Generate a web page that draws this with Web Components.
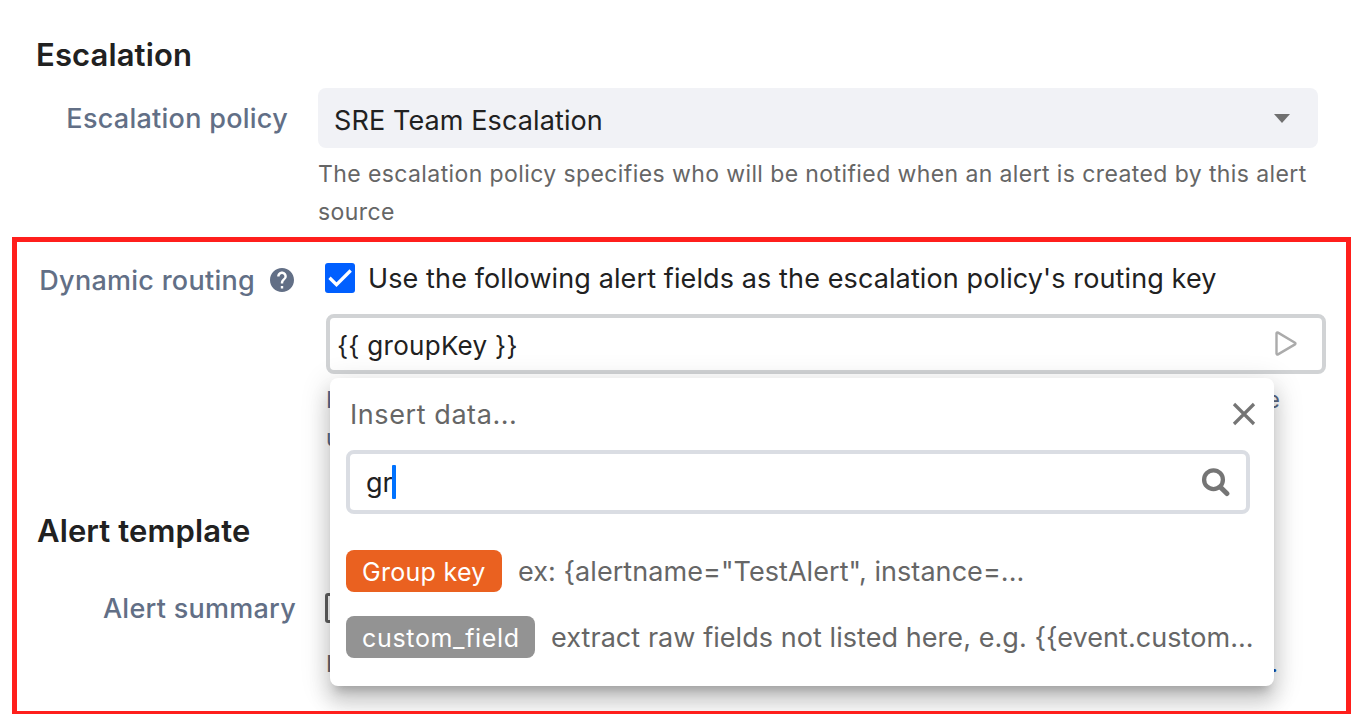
<!DOCTYPE html>
<html lang="en">
<head>
<meta charset="utf-8">
<title>Alert source</title>
<style>
html,body{margin:0;height:714px;overflow:hidden;background:#fff}
body{font-family:Inter,"Liberation Sans",sans-serif;color:#212121}
</style>
</head>
<body>
<alert-source-page></alert-source-page>
<script>
const define = (name, html) => customElements.define(name, class extends HTMLElement {
  connectedCallback() {
    if (this.shadowRoot) return;
    const t = document.createElement('template');
    t.innerHTML = html;
    this.attachShadow({ mode: 'open' }).append(t.content.cloneNode(true));
  }
});

define('section-title', `<style>
:host{display:block;font-size:31px;font-weight:600;line-height:40px;height:40px;letter-spacing:.12px;color:#212121;white-space:nowrap}
</style><slot></slot>`);

define('field-label', `<style>
:host{display:flex;justify-content:flex-end;align-items:center;gap:15px;height:40px;line-height:40px;font-size:27px;font-weight:450;letter-spacing:.27px;color:#626f86;white-space:nowrap}
</style><slot></slot>`);

define('help-icon', `<style>:host{display:block;width:24px;height:24px}svg{display:block}</style>
<svg width="24" height="24" viewBox="2 2 20 20"><path fill="#626f86" d="M12 2C6.48 2 2 6.48 2 12s4.480 10 10 10 10-4.480 10-10S17.520 2 12 2zm1 17h-2v-2h2v2zm2.070-7.750l-.9.920C13.450 12.900 13 13.500 13 15h-2v-.5c0-1.100.450-2.100 1.170-2.830l1.240-1.260c.370-.360.590-.860.590-1.410 0-1.100-.9-2-2-2s-2 .9-2 2H8c0-2.210 1.790-4 4-4s4 1.790 4 4c0 .880-.360 1.680-.930 2.250z"/></svg>`);

define('select-field', `<style>
:host{display:flex;align-items:center;justify-content:space-between;box-sizing:border-box;width:1000px;height:60px;border-radius:8px;background:#f1f2f6;padding:6px 28px 0 16px;font-size:27px;letter-spacing:.11px;line-height:40px}
svg{display:block;margin-top:-5px}
</style><slot></slot><svg width="16" height="9" viewBox="0 0 16 9"><path d="M0 0h16l-8 9z" fill="#707070"/></svg>`);

define('helper-text', `<style>
:host{display:block;font-size:23px;line-height:38px;letter-spacing:.4px;color:#666}
</style><slot></slot>`);

define('check-box', `<style>
:host{display:block;box-sizing:border-box;flex:none;width:30px;height:30px;border-radius:3px;border:3px solid #5f5f5f}
:host([checked]){border:0;background:#005fff}
svg{display:none}:host([checked]) svg{display:block}
</style><svg width="30" height="30"><path d="M4.500 14.800l7 6.800L25.700 7.500" fill="none" stroke="#fff" stroke-width="3.300"/></svg>`);

define('template-input', `<style>
:host{display:flex;align-items:center;justify-content:space-between;box-sizing:border-box;width:1000px;height:60px;border:4px solid #d1d3d5;border-radius:8px;padding:3px 25px 0 7px;font-size:26px;letter-spacing:.28px;line-height:40px}
svg{display:block;margin-top:-4px}
</style><slot></slot><svg width="22" height="25" viewBox="0 0 22 25"><path d="M1.500 2.500v20a1 1 0 0 0 1.500.9l17-10a1 1 0 0 0 0-1.700L3 1.600a1 1 0 0 0-1.500.9z" fill="none" stroke="#ababab" stroke-width="2.400" stroke-linejoin="round"/></svg>`);

define('search-input', `<style>
:host{display:flex;align-items:center;justify-content:space-between;box-sizing:border-box;height:64px;border:4px solid #dadde3;border-radius:8px;padding:0 16px 0 16px;font-size:27px;line-height:40px}
.v{display:flex;align-items:center}.t{width:26px;padding-top:2px;white-space:nowrap}
.c{width:4px;height:34px;border-radius:1px;background:#0072ff}
svg{display:block}
</style><span class="v"><span class="t"><slot></slot></span><span class="c"></span></span>
<svg width="29" height="29" viewBox="0 0 29 29"><g fill="none" stroke="#757575"><circle cx="12.500" cy="11.700" r="9.400" stroke-width="4.300"/><path d="M19.500 19.200l6.400 6.400" stroke-width="5" stroke-linecap="round"/></g></svg>`);

define('data-option', `<style>
:host{display:flex;align-items:center;gap:16px;height:42px;font-size:27px;line-height:42px;letter-spacing:.06px;color:#666;white-space:nowrap}
.tag{box-sizing:border-box;height:42px;padding:2px 0 0 16px;line-height:41px;border-radius:8px;background:var(--tag);width:var(--tag-width);font-size:25px;letter-spacing:var(--tag-spacing);color:#fff}
.d{padding-top:1px}
</style><span class="tag"><slot name="tag"></slot></span><span class="d"><slot></slot></span>`);

define('insert-popup', `<style>
:host{display:flex;flex-direction:column;box-sizing:border-box;width:944px;height:308px;border-radius:8px;background:#fff;padding:16px;box-shadow:0 10px 10px -6px rgba(0,0,0,.2),0 16px 20px 2px rgba(0,0,0,.14),0 6px 28px 4px rgba(0,0,0,.12)}
.head{display:flex;justify-content:space-between;align-items:center;height:40px;padding:0 2px 0 4px;font-size:27px;letter-spacing:.58px;color:#666;line-height:40px}
.head span{padding-top:2px}
search-input{width:904px;margin-top:16px}
.list{display:flex;flex-direction:column;gap:24px;margin-top:36px}
svg{display:block}
</style><div class="head"><span>Insert data...</span><svg width="24" height="24"><path d="M2 2l20 20M22 2L2 22" stroke="#757575" stroke-width="3.200" fill="none"/></svg></div>
<search-input>gr</search-input>
<div class="list"><slot></slot></div>`);

/* The frame line is painted above the popup's shadow. */
define('highlight-frame', `<style>
:host{display:block;position:relative;box-sizing:border-box;width:1339px;height:479px}
:host::after{content:"";position:absolute;inset:0;border:5px solid #ff1f1c;z-index:3;pointer-events:none}
</style><slot></slot>`);

define('alert-source-page', `<style>
:host{display:block;box-sizing:border-box;width:1358px;height:714px;overflow:hidden;padding:35px 0 0 12px}
.top{height:202px;padding-left:24px;box-sizing:border-box}
.row{display:grid}
.policy{grid-template-columns:252px 1000px;column-gap:30px;margin-top:13px}
.policy field-label{margin-top:11px}
.policy helper-text{margin-top:7px}
.routing{grid-template-columns:282px 1001px;column-gap:31px;padding-top:21px}
.routing field-label{margin-top:3px}
.routing help-icon{margin-top:-2px}
.line{display:flex;align-items:center;gap:13px;height:40px;font-size:27px;letter-spacing:.11px;white-space:nowrap}
.routing template-input{margin:16px 0 0 1px}
.under{display:flex;justify-content:space-between;width:954px;margin-left:1px;color:#5a6883;height:38px;font-size:23px;line-height:38px}
.first{margin-top:7px}
section-title{display:block}
.second{padding:54px 0 0 25px}
.summary{grid-template-columns:284px 1001px;column-gap:29px;padding-top:37px}
.summary field-label{margin-top:1px}
.summary check-box{margin-top:5px}
.summary .under{color:#666;margin-top:22px;width:952px}
.dot{color:#0b4fb0}
insert-popup{position:absolute;left:318px;top:141px;z-index:2}
</style>
<div class="top">
  <section-title>Escalation</section-title>
  <div class="row policy">
    <field-label>Escalation policy</field-label>
    <div><select-field>SRE Team Escalation</select-field>
    <helper-text>The escalation policy specifies who will be notified when an alert is created by this alert<br>source</helper-text></div>
  </div>
</div>
<highlight-frame>
  <div class="row routing">
    <field-label>Dynamic routing <help-icon></help-icon></field-label>
    <div>
      <div class="line"><check-box checked></check-box><span>Use the following alert fields as the escalation policy's routing key</span></div>
      <template-input>{{ groupKey }}</template-input>
      <div class="under first"><span>I</span><span>e</span></div>
      <div class="under"><span>u</span></div>
    </div>
  </div>
  <div class="second"><section-title>Alert template</section-title></div>
  <div class="row summary">
    <field-label>Alert summary</field-label>
    <div><check-box></check-box><div class="under"><span>I</span><span class="dot">.</span></div></div>
  </div>
  <insert-popup>
    <data-option style="--tag:#ea6120;--tag-width:156px;--tag-spacing:.28px"><span slot="tag">Group key</span>ex: {alertname="TestAlert", instance=...</data-option>
    <data-option style="--tag:#939393;--tag-width:189px;--tag-spacing:.67px"><span slot="tag">custom_field</span>extract raw fields not listed here, e.g. {{event.custom...</data-option>
  </insert-popup>
</highlight-frame>`);
</script>
</body>
</html>
